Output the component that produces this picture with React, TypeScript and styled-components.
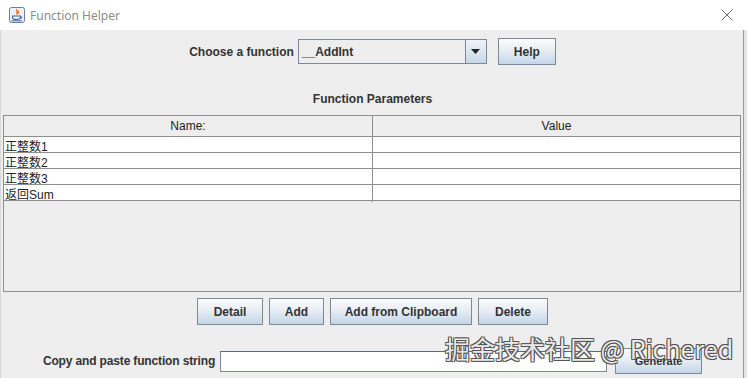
import React from 'react';
import styled, { createGlobalStyle } from 'styled-components';

const GlobalStyle = createGlobalStyle`
  html, body {
    margin: 0;
    padding: 0;
    background: #ffffff;
  }
  * {
    box-sizing: border-box;
  }
`;

const uiFont = `"Liberation Sans", Arial, "Noto Sans CJK SC", sans-serif`;

const Window = styled.div`
  position: relative;
  width: 747px;
  height: 378px;
  overflow: hidden;
  display: flex;
  flex-direction: column;
  font-family: ${uiFont};
  font-size: 12px;
  color: #333333;
`;

const TitleBar = styled.div`
  height: 30px;
  flex: none;
  display: flex;
  align-items: center;
  padding: 0 0 0 9px;
  background: #ffffff;
`;

const TitleText = styled.span`
  margin-left: 5px;
  font-family: "Noto Sans", "Open Sans", sans-serif;
  font-size: 12px;
  color: #8c8c8c;
`;

const CloseButton = styled.div`
  margin-left: auto;
  width: 40px;
  height: 30px;
  display: flex;
  align-items: center;
  justify-content: center;
`;

const Frame = styled.div`
  flex: 1;
  display: flex;
  min-height: 0;
`;

const Body = styled.div`
  flex: 1;
  display: flex;
  flex-direction: column;
  background: #eeeeee;
  border-left: 1px solid #d8d8d8;
  padding: 8px 0 0 1px;
`;

const Edge = styled.div`
  width: 4px;
  flex: none;
  background: #e4e4e4;
  border-left: 1px solid #9a9a9a;
`;

const CenterRow = styled.div<{ gap?: number; top?: number }>`
  display: flex;
  align-items: center;
  justify-content: center;
  gap: ${(p) => p.gap ?? 6}px;
  margin-top: ${(p) => p.top ?? 0}px;
`;

const BoldLabel = styled.span<{ narrow?: boolean }>`
  font-weight: bold;
  font-size: 12px;
  color: #333333;
  letter-spacing: ${(p) => (p.narrow ? '-0.15px' : '0')};
  white-space: nowrap;
`;

const Combo = styled.div`
  width: 189px;
  height: 25px;
  display: flex;
  border: 1px solid #7a8a99;
  background: #eeeeee;
  margin-left: 4px;
`;

const ComboText = styled.div`
  flex: 1;
  display: flex;
  align-items: center;
  padding-left: 3px;
  font-weight: bold;
  color: #333333;
`;

const ComboArrow = styled.div`
  width: 21px;
  display: flex;
  align-items: center;
  justify-content: center;
  border-left: 1px solid #7a8a99;
  background: linear-gradient(#f0f4f8, #c8d8e8);
`;

const Button = styled.button<{ w: number; h?: number }>`
  width: ${(p) => p.w}px;
  height: ${(p) => p.h ?? 27}px;
  padding: 0;
  border: 1px solid #7a8a99;
  background: linear-gradient(#fbfcfd 0%, #e8eef4 45%, #c4d6e8 100%);
  font-family: ${uiFont};
  font-weight: bold;
  font-size: 12px;
  color: #333333;
  cursor: default;
`;

const SectionTitle = styled.div`
  text-align: center;
  font-weight: bold;
  margin-top: 27px;
  height: 14px;
  line-height: 14px;
`;

const TablePane = styled.div`
  margin: 9px 2px 0 1px;
  height: 177px;
  border: 1px solid #8e8e8e;
  background: #eeeeee;
  display: flex;
  flex-direction: column;
`;

const GridRow = styled.div<{ header?: boolean }>`
  display: grid;
  grid-template-columns: 369px 1fr;
  height: ${(p) => (p.header ? 21 : 16)}px;
  background: ${(p) => (p.header ? '#eeeeee' : '#ffffff')};
  border-bottom: 1px solid #8e8e8e;
`;

const Cell = styled.div<{ header?: boolean }>`
  display: flex;
  align-items: center;
  justify-content: ${(p) => (p.header ? 'center' : 'flex-start')};
  padding-left: ${(p) => (p.header ? 0 : 1)}px;
  font-size: 12px;
  color: #222222;
  white-space: nowrap;
  border-right: 1px solid #8e8e8e;
  &:last-child {
    border-right: none;
  }
`;

const TextField = styled.div`
  width: 387px;
  height: 21px;
  border: 1px solid #7a8a99;
  border-top-color: #5a6a79;
  background: #ffffff;
  margin-left: 5px;
  margin-right: 2px;
`;

const Watermark = styled.div`
  position: absolute;
  left: 445px;
  top: 333px;
  font-family: "Noto Sans CJK SC", "Noto Sans", sans-serif;
  font-size: 25px;
  line-height: 30px;
  white-space: nowrap;
  color: rgba(255, 255, 255, 0.9);
  text-shadow: -1px -1px 0 #555, 1px -1px 0 #555, -1px 1px 0 #555, 1px 1px 0 #555;
  pointer-events: none;
`;

const JavaIcon = () => (
  <svg width="16" height="16" viewBox="0 0 16 16">
    <rect x="0.5" y="0.5" width="15" height="15" rx="2" fill="#eef2f7" stroke="#6b7f96" />
    <path d="M8 2 C6 4 10 5 7.5 7.5 M9.5 3.5 C8.5 5 10.5 5.5 9 7" stroke="#e0762a" strokeWidth="1.3" fill="none" />
    <path d="M3.5 9 H11.5 V10 C11.5 12 10 12.5 7.5 12.5 C5 12.5 3.5 12 3.5 10 Z" fill="none" stroke="#3b66a8" strokeWidth="1.1" />
    <path d="M11.5 9.5 C13.5 9.5 13.5 11.5 11 11.3" fill="none" stroke="#3b66a8" strokeWidth="1" />
    <path d="M2.5 13.8 H13" stroke="#3b66a8" strokeWidth="1" />
  </svg>
);

const rows = ['正整数1', '正整数2', '正整数3', '返回Sum'];

export default function App() {
  return (
    <>
      <GlobalStyle />
      <Window>
        <TitleBar>
          <JavaIcon />
          <TitleText>Function Helper</TitleText>
          <CloseButton>
            <svg width="12" height="12" viewBox="0 0 12 12">
              <path d="M0.5 0.5 L11.5 11.5 M11.5 0.5 L0.5 11.5" stroke="#6e6e6e" strokeWidth="1" />
            </svg>
          </CloseButton>
        </TitleBar>
        <Frame>
          <Body>
            <CenterRow gap={0} top={0}>
              <BoldLabel>Choose a function</BoldLabel>
              <Combo>
                <ComboText>__AddInt</ComboText>
                <ComboArrow>
                  <svg width="9" height="5" viewBox="0 0 9 5">
                    <path d="M0 0 H9 L4.5 5 Z" fill="#222" />
                  </svg>
                </ComboArrow>
              </Combo>
              <Button w={58} style={{ marginLeft: 11 }}>
                Help
              </Button>
            </CenterRow>
            <SectionTitle>Function Parameters</SectionTitle>
            <TablePane>
              <GridRow header>
                <Cell header>Name:</Cell>
                <Cell header>Value</Cell>
              </GridRow>
              {rows.map((name) => (
                <GridRow key={name}>
                  <Cell>{name}</Cell>
                  <Cell />
                </GridRow>
              ))}
            </TablePane>
            <CenterRow gap={6} top={6}>
              <Button w={66}>Detail</Button>
              <Button w={55}>Add</Button>
              <Button w={142}>Add from Clipboard</Button>
              <Button w={70}>Delete</Button>
            </CenterRow>
            <CenterRow gap={0} top={23}>
              <BoldLabel narrow>Copy and paste function string</BoldLabel>
              <TextField />
              <Button w={87} h={26} style={{ marginLeft: 6, fontSize: 11 }}>
                Generate
              </Button>
            </CenterRow>
          </Body>
          <Edge />
        </Frame>
        <Watermark>掘金技术社区 @ Richered</Watermark>
      </Window>
    </>
  );
}
